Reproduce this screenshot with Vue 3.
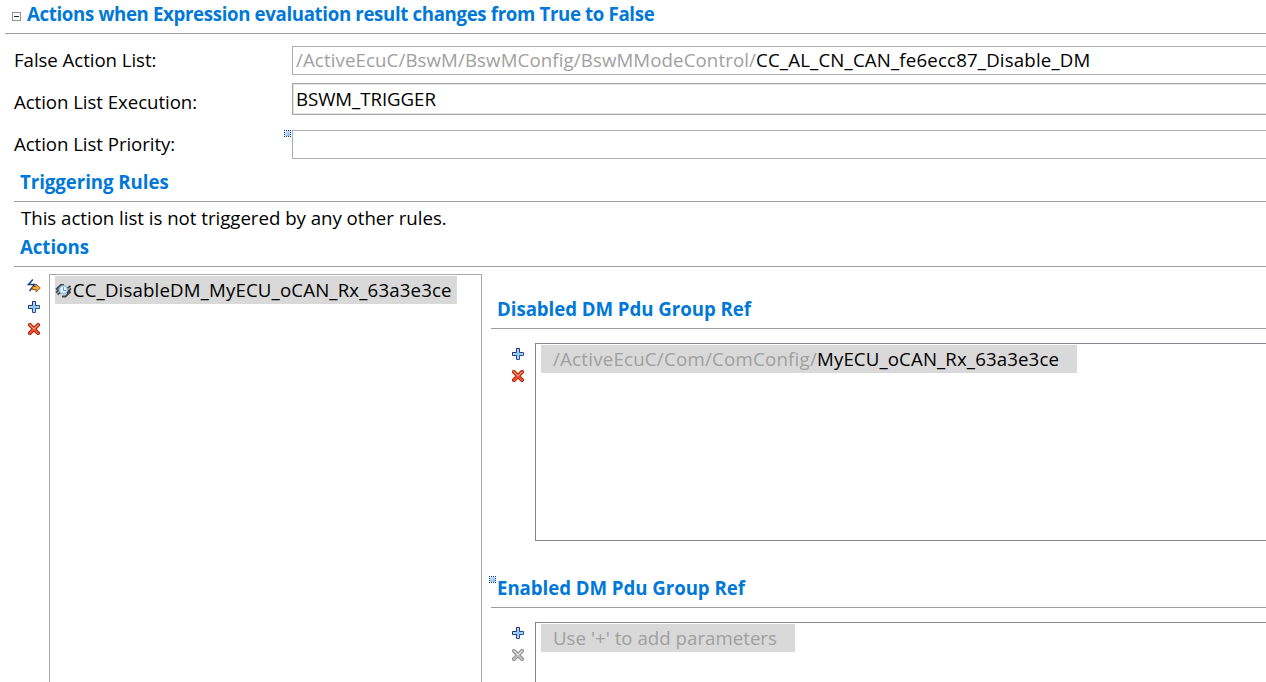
<script setup>
const formRows = [
  { label: 'False Action List:', kind: 'text', path: '/ActiveEcuC/BswM/BswMConfig/BswMModeControl/', value: 'CC_AL_CN_CAN_fe6ecc87_Disable_DM' },
  { label: 'Action List Execution:', kind: 'combo', value: 'BSWM_TRIGGER' },
  { label: 'Action List Priority:', kind: 'text', value: '', marker: true },
]

const groups = [
  { title: 'Disabled DM Pdu Group Ref', path: '/ActiveEcuC/Com/ComConfig/', value: 'MyECU_oCAN_Rx_63a3e3ce', canDelete: true },
  { title: 'Enabled DM Pdu Group Ref', hint: "Use '+' to add parameters", canDelete: false, marker: true },
]
</script>

<template>
  <svg class="symbols" width="0" height="0" aria-hidden="true">
    <defs>
      <linearGradient id="plusEdge" x1="0" y1="0" x2="1" y2="1">
        <stop offset="0" stop-color="#1b1f5e" />
        <stop offset="1" stop-color="#2a68b0" />
      </linearGradient>
      <linearGradient id="plusFill" x1="0" y1="0" x2="1" y2="1">
        <stop offset="0" stop-color="#ffffff" />
        <stop offset=".5" stop-color="#86c4f4" />
        <stop offset="1" stop-color="#e8f6ff" />
      </linearGradient>
      <linearGradient id="markFill" x1="0" y1="0" x2="1" y2="1">
        <stop offset="0" stop-color="#d4e9ff" />
        <stop offset="1" stop-color="#7fbaf5" />
      </linearGradient>
      <symbol id="plus" viewBox="0 0 12 12">
        <path d="M4.500 .5h3v4h4v3h-4v4h-3v-4h-4v-3h4z" fill="url(#plusFill)" stroke="url(#plusEdge)" />
      </symbol>
      <symbol id="cross" viewBox="0 0 12 12">
        <path d="M1.900 1.900l8.200 8.200M10.100 1.900l-8.200 8.200" fill="none" stroke="var(--edge)" stroke-width="4" stroke-linecap="round" />
        <path d="M1.800 1.800l8.400 8.400M10.200 1.800l-8.400 8.400" fill="none" stroke="currentColor" stroke-width="2.200" stroke-linecap="round" />
        <path d="M1.500 1.500L6 6M10.200 1.800L6 6" fill="none" stroke="var(--shine)" stroke-width="1" />
      </symbol>
      <symbol id="marker" viewBox="0 0 7 7">
        <rect x="1" y="1" width="5" height="5" fill="url(#markFill)" />
        <path d="M0 0h1v1H0zM2 0h1v1H2zM4 0h1v1H4zM6 0h1v1H6zM0 2h1v1H0zM6 2h1v1H6zM0 4h1v1H0zM6 4h1v1H6zM0 6h1v1H0zM2 6h1v1H2zM4 6h1v1H4zM6 6h1v1H6z" fill="#003f8c" shape-rendering="crispEdges" />
      </symbol>
    </defs>
  </svg>

  <main class="editor">
    <header class="section-head top">
      <span class="toggle"><i></i></span>
      <h1>Actions when Expression evaluation result changes from True to False</h1>
    </header>

    <div class="form">
      <div v-for="row in formRows" :key="row.label" class="form-row" :class="row.kind">
        <label>{{ row.label }}</label>
        <div class="field">
          <svg v-if="row.marker" class="marker" width="7" height="7"><use href="#marker" /></svg>
          <span v-if="row.path" class="path">{{ row.path }}</span><span :class="{ target: row.path }">{{ row.value }}</span>
        </div>
      </div>
    </div>

    <div class="nested">
      <h2 class="section-head">Triggering Rules</h2>
      <p>This action list is not triggered by any other rules.</p>
      <h2 class="section-head">Actions</h2>

      <div class="columns">
        <div class="tools">
          <svg width="14" height="14" viewBox="0 0 14 14">
            <path d="M5.800 .5L1.500 5.500h6L2.500 12" fill="none" stroke="#1f4180" stroke-width="1.500" />
            <path d="M5.500 7.500h3.500V5l4.300 4L9 13v-2.500H5.500z" fill="#f3ae42" stroke="#9c5510" />
          </svg>
          <svg width="12" height="12"><use href="#plus" /></svg>
          <svg class="red" width="12" height="12"><use href="#cross" /></svg>
        </div>

        <div class="tree">
          <div class="tree-item">
            <svg width="17" height="16" viewBox="0 0 17 16">
              <path d="M1 7.500L6 3h3M1 10.500L5 7M2.500 12.500L6 10M7 14.500h3.500l5-5M11.500 11L16 6.500M12 6.500L15.500 4" fill="none" stroke="#44484d" stroke-width="1.900" />
              <circle cx="8.300" cy="7.800" r="4.200" fill="#c3e0fa" stroke="#7fb2e2" />
              <circle cx="8.600" cy="7.400" r="2.600" fill="#f3faff" />
              <path d="M8.500 5.200v3.300H11" fill="none" stroke="#4b97d9" />
            </svg>
            <span>CC_DisableDM_MyECU_oCAN_Rx_63a3e3ce</span>
          </div>
        </div>

        <div class="details">
          <section v-for="g in groups" :key="g.title" class="group">
            <h2 class="section-head">
              <svg v-if="g.marker" class="marker" width="7" height="7"><use href="#marker" /></svg>
              {{ g.title }}
            </h2>
            <div class="group-body">
              <div class="tools">
                <svg width="12" height="12"><use href="#plus" /></svg>
                <svg :class="g.canDelete ? 'red' : 'grey'" width="12" height="12"><use href="#cross" /></svg>
              </div>
              <div class="list">
                <div class="list-item">
                  <span v-if="g.hint" class="hint">{{ g.hint }}</span>
                  <template v-else><span class="path">{{ g.path }}</span><span class="target">{{ g.value }}</span></template>
                </div>
              </div>
            </div>
          </section>
        </div>
      </div>
    </div>
  </main>
</template>

<style>
body { margin: 0; background: #fff; overflow: hidden; }
</style>

<style scoped>
.symbols { position: absolute; }
.editor {
  height: 682px;
  overflow: hidden;
  display: flex;
  flex-direction: column;
  color: #000;
  font: 18.67px/28px "Open Sans", "Noto Sans", sans-serif;
  white-space: nowrap;
}
svg { display: block; flex: none; }
h1, h2, p { margin: 0; font-size: inherit; }
.section-head {
  box-sizing: border-box;
  height: 34px;
  flex: none;
  border-bottom: 1px solid #9d9da0;
  color: #0078d7;
  font-weight: 700;
  letter-spacing: -.05px;
}
.top { display: flex; margin-left: 5px; padding-left: 7px; }
.top h1 { margin-left: 6px; letter-spacing: -.35px; }
.toggle {
  box-sizing: border-box;
  width: 9px;
  height: 9px;
  margin-top: 12px;
  border: 1px solid #919191;
  display: flex;
  align-items: center;
  justify-content: center;
}
.toggle i { width: 5px; height: 1px; background: #222; }

.form { height: 134px; padding-top: 12px; box-sizing: border-box; flex: none; }
.form-row { display: grid; grid-template-columns: 278px 1fr; height: 42px; margin-left: 14px; align-items: start; }
.form-row label { letter-spacing: -.06px; }
.field {
  position: relative;
  box-sizing: border-box;
  height: 29px;
  padding-left: 3px;
  border: 1px solid #abadb3;
  border-right: 0;
  line-height: 26px;
}
.combo .field {
  height: 32px;
  margin-top: -5px;
  border-color: #a6a6a6;
  box-shadow: inset 1px 1px #e3e3e3, inset 0 -1px #e3e3e3;
  line-height: 30px;
  letter-spacing: -.05px;
}
.path { color: #a0a0a0; letter-spacing: .11px; }
.target { letter-spacing: .17px; }
.field .marker { position: absolute; left: -9px; top: -1px; }

.nested { flex: 1; margin-left: 14px; display: flex; flex-direction: column; min-height: 0; }
.nested > .section-head { padding-left: 6px; }
.nested p { height: 31px; padding: 2px 0 0 7px; box-sizing: border-box; letter-spacing: -.02px; }
.columns { flex: 1; display: grid; grid-template-columns: 35px 433px 1fr; padding-top: 7px; min-height: 0; }
.tools { display: flex; flex-direction: column; align-items: flex-start; gap: 10px; }
.columns > .tools { padding: 5px 0 0 14px; }
.columns > .tools svg:first-child { margin: 0 0 -2px -1px; }
.tree { box-sizing: border-box; border: 1px solid #a9a9ab; border-bottom: 0; padding: 1px 0 0 5px; }
.tree-item {
  display: inline-flex;
  align-items: center;
  width: 402px;
  height: 28px;
  background: #d9d9d9;
  letter-spacing: .15px;
}
.tree-item span { margin-left: .8px; }
.details { padding: 21px 0 0 9px; min-width: 0; }
.group { height: 279px; }
.group .section-head { position: relative; padding-left: 6px; }
.group .marker { position: absolute; left: -2px; top: 2px; }
.group-body { display: flex; padding-top: 14px; }
.group .tools { width: 44px; padding: 5px 0 0 21px; box-sizing: border-box; }
.list { flex: 1; height: 198px; box-sizing: border-box; border: 1px solid #828790; border-right: 0; padding: 1px 0 0 5px; }
.list-item { display: inline-block; height: 28px; padding: 0 18px 0 12px; background: #d9d9d9; vertical-align: top; }
.list-item .path { letter-spacing: .24px; }
.list-item .target { letter-spacing: .12px; }
.hint { color: #a0a0a0; letter-spacing: .02px; }
.red { color: #f4512e; --edge: #a5260f; --shine: #ffa88c; }
.grey { color: #c0c0c0; --edge: #8c8c8c; --shine: #e4e4e4; }
</style>
